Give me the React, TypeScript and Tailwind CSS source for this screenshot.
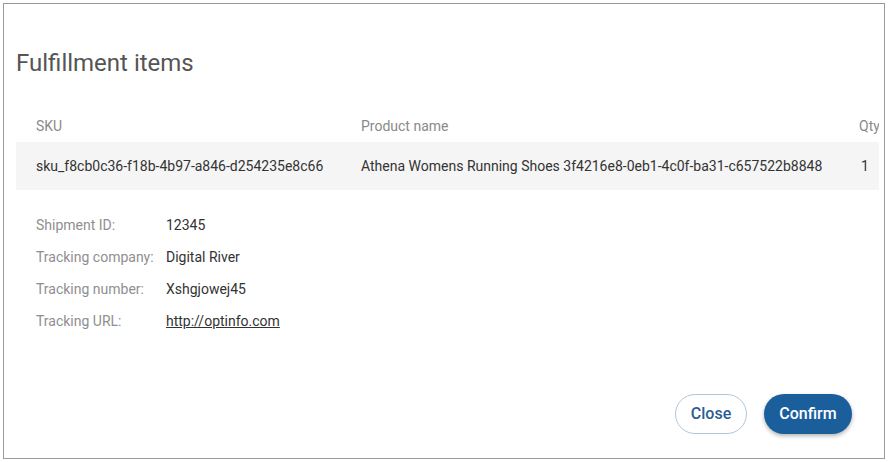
import React from "react";

export default function App() {
  const details = [
    ["Shipment ID:", "12345"],
    ["Tracking company:", "Digital River"],
    ["Tracking number:", "Xshgjowej45"],
    ["Tracking URL:", "http://optinfo.com"],
  ];
  return (
    <div className="w-[890px] h-[462px] bg-white p-[3px] font-['Roboto',sans-serif]">
      <div className="w-[882px] h-[456px] border border-[#9a9a9a] flex flex-col pl-3 pr-1">
        <h1 className="mt-[40px] text-[24px] leading-[38px] text-[#555555] font-normal">
          Fulfillment items
        </h1>
        <div className="mt-[28px] overflow-hidden w-[863px]">
          <div className="grid grid-cols-[345px_498px_60px] w-[903px] h-[32px] items-center text-[14px] text-[#8a8a8a]">
            <div className="pl-5">SKU</div>
            <div>Product name</div>
            <div>Qty</div>
          </div>
          <div className="grid grid-cols-[345px_498px_60px] w-[903px] h-[48px] items-center bg-[#f5f5f5] text-[14px] text-[#333333]">
            <div className="pl-5">sku_f8cb0c36-f18b-4b97-a846-d254235e8c66</div>
            <div>Athena Womens Running Shoes 3f4216e8-0eb1-4c0f-ba31-c657522b8848</div>
            <div className="pl-[2px]">1</div>
          </div>
        </div>
        <div className="mt-[19px] flex flex-col pl-5 text-[14px]">
          {details.map(([k, v], i) => (
            <div key={k} className="flex h-[32px] items-center">
              <div className="w-[130px] text-[#8f8f8f]">{k}</div>
              <div className={i === 3 ? "text-[#333333] underline" : "text-[#333333]"}>{v}</div>
            </div>
          ))}
        </div>
        <div className="flex-1" />
        <div className="flex justify-end gap-[17px] pr-[28px] mb-[24px]">
          <button className="h-[40px] w-[72px] rounded-full border border-[#b3c5d8] text-[#2c5c8f] text-[16px] font-medium bg-white">
            Close
          </button>
          <button className="h-[40px] w-[88px] rounded-full bg-[#1b5e9c] text-white text-[16px] font-medium shadow-[0_2px_4px_rgba(0,0,0,0.3)]">
            Confirm
          </button>
        </div>
      </div>
    </div>
  );
}
